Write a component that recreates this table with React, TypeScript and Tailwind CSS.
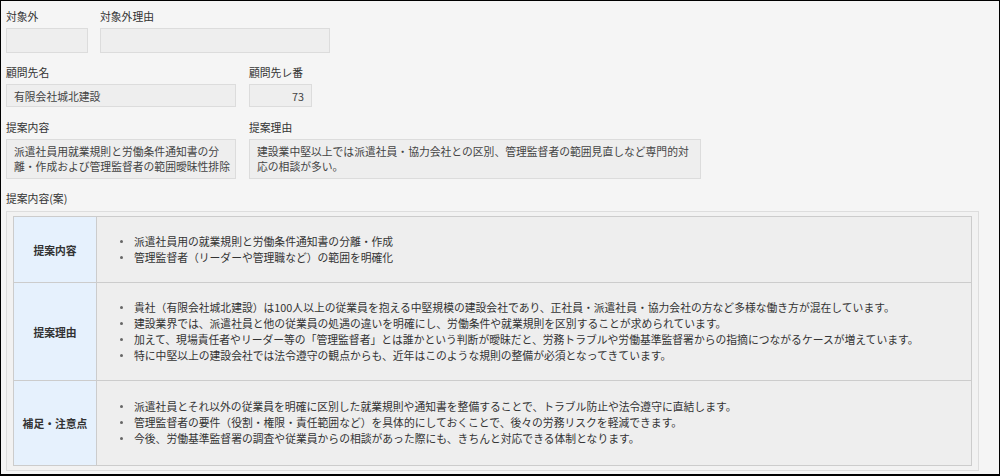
import React from 'react';

const rows = [
  {
    head: '提案内容',
    pad: 'pt-[16px] pb-[17px]',
    items: [
      '派遣社員用の就業規則と労働条件通知書の分離・作成',
      '管理監督者（リーダーや管理職など）の範囲を明確化',
    ],
  },
  {
    head: '提案理由',
    pad: 'pt-[16px] pb-[17px]',
    items: [
      '貴社（有限会社城北建設）は100人以上の従業員を抱える中堅規模の建設会社であり、正社員・派遣社員・協力会社の方など多様な働き方が混在しています。',
      '建設業界では、派遣社員と他の従業員の処遇の違いを明確にし、労働条件や就業規則を区別することが求められています。',
      '加えて、現場責任者やリーダー等の「管理監督者」とは誰かという判断が曖昧だと、労務トラブルや労働基準監督署からの指摘につながるケースが増えています。',
      '特に中堅以上の建設会社では法令遵守の観点からも、近年はこのような規則の整備が必須となってきています。',
    ],
  },
  {
    head: '補足・注意点',
    pad: 'pt-[17px] pb-[19px]',
    items: [
      '派遣社員とそれ以外の従業員を明確に区別した就業規則や通知書を整備することで、トラブル防止や法令遵守に直結します。',
      '管理監督者の要件（役割・権限・責任範囲など）を具体的にしておくことで、後々の労務リスクを軽減できます。',
      '今後、労働基準監督署の調査や従業員からの相談があった際にも、きちんと対応できる体制となります。',
    ],
  },
];

function Label({ children }: { children: React.ReactNode }) {
  return <div className="h-4 leading-4 whitespace-nowrap">{children}</div>;
}

export default function App() {
  return (
    <div className="w-[1000px] h-[476px] overflow-hidden border border-b-2 border-black bg-[#f5f5f5] text-[#333] text-[10.8px] leading-4 font-['Noto_Sans_CJK_JP','Noto_Sans_CJK_SC',sans-serif] pl-[5px] pt-[7px]">
      {/* 対象外 */}
      <div className="flex gap-3">
        <div className="w-[82px]">
          <Label>対象外</Label>
          <div className="mt-1 h-[25px] bg-[#eeeeee] border border-[#dcdcdc]" />
        </div>
        <div className="w-[230px]">
          <Label>対象外理由</Label>
          <div className="mt-1 h-[25px] bg-[#eeeeee] border border-[#dcdcdc]" />
        </div>
      </div>

      {/* 顧問先 */}
      <div className="flex gap-[13px] mt-[11px]">
        <div className="w-[230px]">
          <Label>顧問先名</Label>
          <div className="mt-1 h-[23px] flex items-center pl-[7px] bg-[#eeeeee] border border-[#dcdcdc] text-[#444]">
            有限会社城北建設
          </div>
        </div>
        <div className="w-[63px]">
          <Label>顧問先レ番</Label>
          <div className="mt-1 h-[23px] flex items-center justify-end pr-[7px] bg-[#eeeeee] border border-[#dcdcdc] text-[#444]">
            73
          </div>
        </div>
      </div>

      {/* 提案 */}
      <div className="flex gap-[13px] mt-3">
        <div className="w-[230px]">
          <Label>提案内容</Label>
          <div className="mt-1 h-[40px] pl-[7px] pr-px py-[4px] leading-[15px] bg-[#eeeeee] border border-[#dcdcdc] text-[#444]">
            派遣社員用就業規則と労働条件通知書の分離・作成および管理監督者の範囲曖昧性排除
          </div>
        </div>
        <div className="w-[452px]">
          <Label>提案理由</Label>
          <div className="mt-1 h-[40px] pl-[7px] pr-[3px] py-[4px] leading-[15px] bg-[#eeeeee] border border-[#dcdcdc] text-[#444]">
            建設業中堅以上では派遣社員・協力会社との区別、管理監督者の範囲見直しなど専門的対応の相談が多い。
          </div>
        </div>
      </div>

      {/* 提案内容(案) */}
      <div className="mt-[11px]">
        <Label>提案内容(案)</Label>
        <div className="mt-[5px] w-[973px] border border-[#dddddd] bg-[#f2f2f2] px-[6px] py-[4px]">
          <table className="w-full border-collapse">
            <tbody>
              {rows.map((r) => (
                <tr key={r.head}>
                  <td className="w-[83px] border border-[#cccccc] bg-[#e6f1fd] text-center font-bold align-middle">
                    {r.head}
                  </td>
                  <td className={`border border-[#cccccc] bg-[#eeeeee] pl-[23px] align-middle ${r.pad}`}>
                    <ul>
                      {r.items.map((t) => (
                        <li key={t} className="flex">
                          <span className="mt-[7px] mr-[11px] w-[3px] h-[3px] rounded-full bg-[#666] shrink-0" />
                          <span>{t}</span>
                        </li>
                      ))}
                    </ul>
                  </td>
                </tr>
              ))}
            </tbody>
          </table>
        </div>
      </div>
    </div>
  );
}
